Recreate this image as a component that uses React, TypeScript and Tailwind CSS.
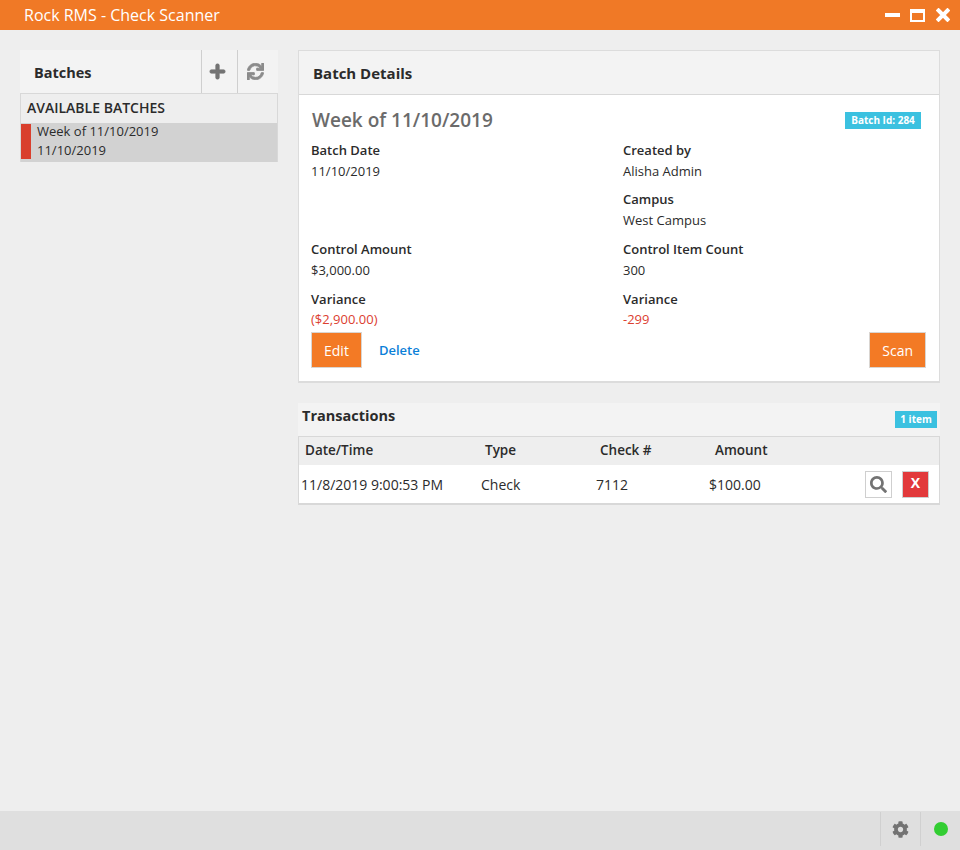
import React from "react";
import { FaCog, FaPlus, FaSearch, FaSync } from "react-icons/fa";

function Field({ label, value, red }: { label: string; value: string; red?: boolean }) {
  return (
    <div className="h-[49px]">
      <div className="text-[13px] leading-[20px] font-semibold text-[#2b2b2b]">{label}</div>
      <div className={red ? "text-[13px] leading-[20px] text-[#dc4030]" : "text-[13px] leading-[20px] mt-[1px] text-[#2b2b2b]"}>{value}</div>
    </div>
  );
}

function OrangeButton({ children }: { children: React.ReactNode }) {
  return (
    <button className="h-[36px] bg-[#f37a25] border border-[#d9d5d1] text-white text-[14px] px-[12px]">
      {children}
    </button>
  );
}

export default function App() {
  return (
    <div className="w-[960px] h-[850px] flex flex-col bg-[#eeeeee] overflow-hidden font-['Open_Sans',sans-serif]">
      {/* Title bar */}
      <div className="h-[30px] shrink-0 bg-[#f07926] flex items-center pl-[24px] pr-[10px] text-white">
        <span className="text-[16px] leading-[30px] flex-1">Rock RMS - Check Scanner</span>
        <div className="flex items-center">
          <div className="w-[15px] h-[4px] bg-white" />
          <div className="w-[15px] h-[13px] border-2 border-t-[4px] border-white ml-[10px]" />
          <svg className="w-[14px] h-[14px] ml-[11px]" viewBox="0 0 14 14">
            <path d="M2.5 2.5 L11.5 11.5 M11.5 2.5 L2.5 11.5" stroke="currentColor" strokeWidth="4" strokeLinecap="square" />
          </svg>
        </div>
      </div>

      <div className="flex-1 flex pt-[20px] pl-[20px] pr-[20px] gap-[20px] min-h-0">
        {/* Batches column */}
        <div className="w-[258px] shrink-0">
          <div className="h-[43px] bg-[#f3f3f3] flex items-stretch">
            <div className="flex-1 pl-[14px] text-[14.5px] leading-[45px] font-bold text-[#2b2b2b]">Batches</div>
            <div className="w-[36px] border-l border-[#cfcfcf] pr-[4px] flex items-center justify-center text-[#737373]">
              <FaPlus className="w-[17px] h-[17px]" stroke="currentColor" strokeWidth={30} />
            </div>
            <div className="w-[41px] border-l border-[#cfcfcf] pr-[5px] flex items-center justify-center text-[#8c8c8c]">
              <FaSync className="w-[17px] h-[17px]" stroke="currentColor" strokeWidth={24} />
            </div>
          </div>
          <div className="border border-[#d8d8d8] border-b-0">
            <div className="h-[29px] pl-[6px] text-[14px] leading-[28px] font-semibold text-[#2b2b2b]">AVAILABLE BATCHES</div>
            <div className="h-[39px] bg-[#d2d2d2] flex pt-px">
              <div className="w-[10px] h-[35px] bg-[#d93f2d] shrink-0" />
              <div className="pl-[6px] text-[13px] leading-[19px] text-[#2b2b2b] -mt-[2px]">
                <div>Week of 11/10/2019</div>
                <div>11/10/2019</div>
              </div>
            </div>
          </div>
        </div>

        {/* Details column */}
        <div className="flex-1 min-w-0">
          <div className="h-[333px] border-2 border-t border-l border-r border-[#dcdcdc] bg-white flex flex-col">
            <div className="h-[44px] shrink-0 bg-[#f3f3f3] border-b border-[#d8d8d8] pl-[14px] text-[15px] leading-[44px] font-bold text-[#2b2b2b]">
              Batch Details
            </div>
            <div className="flex-1 pl-[12px] pr-[13px]">
              <div className="flex items-start justify-between pr-[5px]">
                <div className="text-[19px] leading-[28px] mt-[11px] ml-[1px] font-semibold text-[#6b6b6b]">Week of 11/10/2019</div>
                <div className="mt-[17px] h-[17px] w-[76px] text-center bg-[#3bc1e0] text-white text-[10px] leading-[17px] font-bold">Batch Id: 284</div>
              </div>
              <div className="grid grid-cols-[312px_1fr] mt-[6px]">
                <div>
                  <Field label="Batch Date" value="11/10/2019" />
                  <div className="h-[50px]" />
                  <div className="h-[50px]"><Field label="Control Amount" value="$3,000.00" /></div>
                  <Field label="Variance" value="($2,900.00)" red />
                </div>
                <div>
                  <Field label="Created by" value="Alisha Admin" />
                  <div className="h-[50px]"><Field label="Campus" value="West Campus" /></div>
                  <div className="h-[50px]"><Field label="Control Item Count" value="300" /></div>
                  <Field label="Variance" value="-299" red />
                </div>
              </div>
              <div className="flex items-center justify-between -mt-[6px]">
                <div className="flex items-center">
                  <OrangeButton>Edit</OrangeButton>
                  <span className="ml-[17px] mt-[1px] text-[13px] font-semibold text-[#0b80d8]">Delete</span>
                </div>
                <OrangeButton>Scan</OrangeButton>
              </div>
            </div>
          </div>

          {/* Transactions */}
          <div className="mt-[20px] h-[33px] bg-[#f3f3f3] flex items-start justify-between pl-[4px] pr-[3px]">
            <span className="text-[14.5px] leading-[26px] font-bold text-[#2b2b2b]">Transactions</span>
            <span className="mt-[8px] h-[17px] w-[42px] text-center bg-[#3bc1e0] text-white text-[10px] leading-[17px] font-bold">1 item</span>
          </div>
          <div className="border border-b-2 border-[#d8d8d8] bg-white">
            <div className="h-[28px] pb-[2px] bg-[#eeeeee] grid grid-cols-[180px_115px_115px_1fr] pl-[6px] items-center text-[13.5px] font-semibold text-[#2b2b2b]">
              <span>Date/Time</span>
              <span>Type</span>
              <span>Check #</span>
              <span>Amount</span>
            </div>
            <div className="h-[38px] grid grid-cols-[180px_115px_113px_1fr] pl-[2px] items-center text-[14px] text-[#2b2b2b]">
              <span>11/8/2019 9:00:53 PM</span>
              <span>Check</span>
              <span>7112</span>
              <div className="flex items-center justify-between pr-[10px]">
                <span>$100.00</span>
                <div className="flex items-center gap-[10px]">
                  <div className="w-[27px] h-[27px] border border-[#cfcfcf] bg-white flex items-center justify-center text-[#737373]">
                    <FaSearch className="w-[17px] h-[17px]" />
                  </div>
                  <div className="w-[27px] h-[27px] pb-[3px] border border-[#cfcfcf] bg-[#e2393b] flex items-center justify-center text-white text-[14px] font-bold">
                    X
                  </div>
                </div>
              </div>
            </div>
          </div>
        </div>
      </div>

      {/* Status bar */}
      <div className="h-[39px] shrink-0 bg-[#dfdfdf] flex justify-end">
        <div className="w-[40px] h-[34px] mt-[1px] border-l border-[#d0d0d0] flex items-center justify-center text-[#737373]">
          <FaCog className="w-[17px] h-[17px]" />
        </div>
        <div className="w-[40px] h-[34px] mt-[1px] border-l border-[#d0d0d0] flex items-center justify-center">
          <div className="w-[14px] h-[14px] rounded-full bg-[#32cd32]" />
        </div>
      </div>
    </div>
  );
}
